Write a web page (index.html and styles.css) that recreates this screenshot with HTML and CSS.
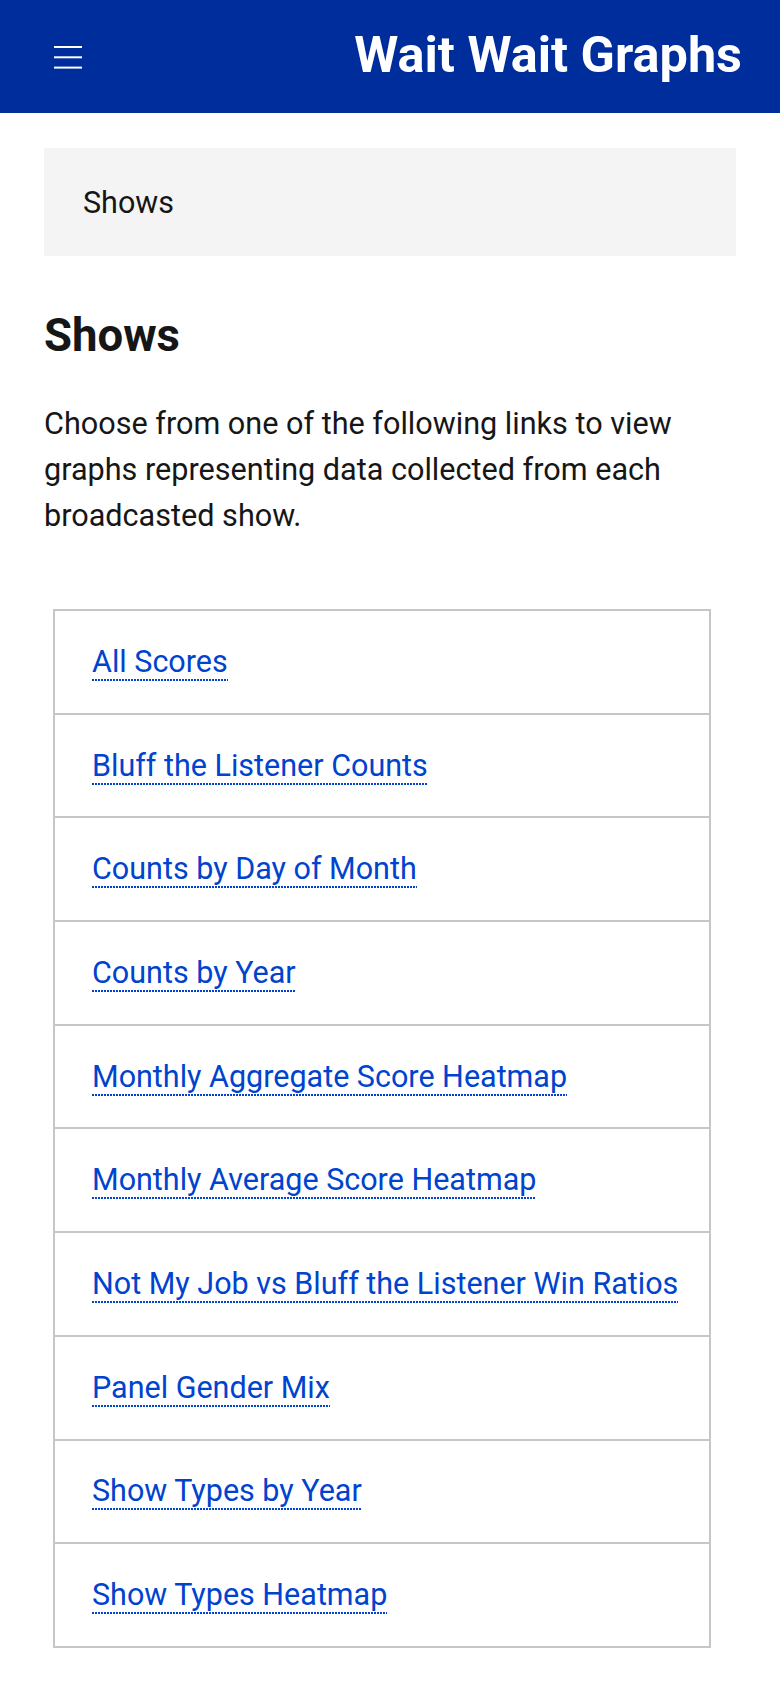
FILE: index.html
```html
<!DOCTYPE html>
<html lang="en">
<head>
<meta charset="utf-8">
<meta name="viewport" content="width=device-width, initial-scale=1">
<title>Shows - Wait Wait Graphs</title>
<link rel="stylesheet" href="styles.css">
</head>
<body>
<header class="site-header">
  <button class="menu-btn" type="button" aria-label="Open menu">
    <svg class="menu-icon" width="28" height="24" viewBox="0 0 28 24" aria-hidden="true">
      <line x1="0" y1="2" x2="28" y2="2"/>
      <line x1="0" y1="12.3" x2="28" y2="12.3"/>
      <line x1="0" y1="22.6" x2="28" y2="22.6"/>
    </svg>
  </button>
  <h1 class="site-title">Wait Wait Graphs</h1>
</header>
<main class="content">
  <nav class="breadcrumb" aria-label="Breadcrumb">
    <span class="breadcrumb-item">Shows</span>
  </nav>
  <h2 class="page-title">Shows</h2>
  <p class="intro">Choose from one of the following links to view graphs representing data collected from each broadcasted show.</p>
  <ul class="link-list">
    <li class="link-item"><a class="graph-link" href="#">All Scores</a></li>
    <li class="link-item"><a class="graph-link" href="#">Bluff the Listener Counts</a></li>
    <li class="link-item"><a class="graph-link" href="#">Counts by Day of Month</a></li>
    <li class="link-item"><a class="graph-link" href="#">Counts by Year</a></li>
    <li class="link-item"><a class="graph-link" href="#">Monthly Aggregate Score Heatmap</a></li>
    <li class="link-item"><a class="graph-link" href="#">Monthly Average Score Heatmap</a></li>
    <li class="link-item"><a class="graph-link" href="#">Not My Job vs Bluff the Listener Win Ratios</a></li>
    <li class="link-item"><a class="graph-link" href="#">Panel Gender Mix</a></li>
    <li class="link-item"><a class="graph-link" href="#">Show Types by Year</a></li>
    <li class="link-item"><a class="graph-link" href="#">Show Types Heatmap</a></li>
  </ul>
</main>
</body>
</html>
```
FILE: styles.css
```css
html, body {
  margin: 0;
  padding: 0;
  background: #ffffff;
}

body {
  font-family: Roboto, "Noto Sans", "Liberation Sans", sans-serif;
  color: #161616;
}

.site-header {
  box-sizing: border-box;
  height: 113px;
  background: #002d9c;
  display: flex;
  align-items: center;
  justify-content: space-between;
  padding: 0 38px 0 54px;
}

.menu-btn {
  display: flex;
  padding: 0;
  margin: 0;
  border: 0;
  background: transparent;
  cursor: pointer;
}

.menu-icon line {
  stroke: #ffffff;
  stroke-width: 2;
}

.site-title {
  margin: 0 0 3px;
  font-size: 50.4px;
  font-weight: 700;
  line-height: 1.2;
  color: #ffffff;
}

.content {
  padding: 35px 44px 40px;
}

.breadcrumb {
  background: #f4f4f4;
  padding: 32px 39px 31px;
  font-size: 30.5px;
  line-height: 45px;
  color: #161616;
}

.page-title {
  margin: 52px 0 0;
  font-size: 45.5px;
  line-height: 56px;
  font-weight: 700;
  color: #161616;
}

.intro {
  margin: 37px 0 0;
  font-size: 30.6px;
  line-height: 46px;
  color: #161616;
}

.link-list {
  list-style: none;
  box-sizing: border-box;
  width: 658px;
  margin: 70px 0 0 9px;
  padding: 0;
  border: 2px solid #c6c6c6;
  border-bottom: 0;
}

.link-item {
  border-bottom: 2px solid #c6c6c6;
  padding: 27.85px 16px 27.85px 37px;
  font-size: 30.5px;
  line-height: 46px;
  white-space: nowrap;
}

.graph-link {
  color: #0043ce;
  text-decoration: none;
  padding-bottom: 2px;
  background-image: linear-gradient(to right, currentColor 2px, transparent 2px);
  background-size: 3px 2px;
  background-repeat: repeat-x;
  background-position: 0 100%;
}
```
